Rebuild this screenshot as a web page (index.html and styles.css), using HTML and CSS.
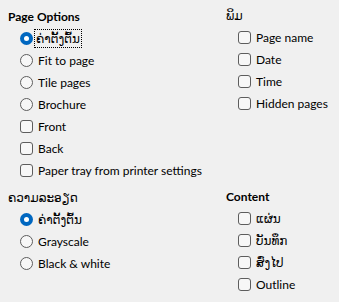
FILE: index.html
```html
<!DOCTYPE html>
<html lang="lo">
<head>
  <meta charset="UTF-8">
  <title>Print Options</title>
  <link rel="stylesheet" href="styles.css">
</head>
<body>
  <div class="panel">
    <div class="group">
      <h3>Page Options</h3>
      <label class="item"><span class="radio checked"></span><span class="text focus">ຄ່າຕັ້ງຕົ້ນ</span></label>
      <label class="item"><span class="radio"></span><span class="text">Fit to page</span></label>
      <label class="item"><span class="radio"></span><span class="text">Tile pages</span></label>
      <label class="item"><span class="radio"></span><span class="text">Brochure</span></label>
      <label class="item"><span class="check"></span><span class="text">Front</span></label>
      <label class="item"><span class="check"></span><span class="text">Back</span></label>
      <label class="item"><span class="check"></span><span class="text">Paper tray from printer settings</span></label>
    </div>
    <div class="group right">
      <h3 class="lao">ພິມ</h3>
      <label class="item"><span class="check"></span><span class="text">Page name</span></label>
      <label class="item"><span class="check"></span><span class="text">Date</span></label>
      <label class="item"><span class="check"></span><span class="text">Time</span></label>
      <label class="item"><span class="check"></span><span class="text">Hidden pages</span></label>
    </div>
    <div class="group">
      <h3 class="lao">ຄວາມລະອຽດ</h3>
      <label class="item"><span class="radio checked"></span><span class="text">ຄ່າຕັ້ງຕົ້ນ</span></label>
      <label class="item"><span class="radio"></span><span class="text">Grayscale</span></label>
      <label class="item"><span class="radio"></span><span class="text">Black &amp; white</span></label>
    </div>
    <div class="group right">
      <h3>Content</h3>
      <label class="item"><span class="check"></span><span class="text">ແຜ່ນ</span></label>
      <label class="item"><span class="check"></span><span class="text">ບັນທຶກ</span></label>
      <label class="item"><span class="check"></span><span class="text">ສົ່ງໄປ</span></label>
      <label class="item"><span class="check"></span><span class="text">Outline</span></label>
    </div>
  </div>
</body>
</html>
```

FILE: styles.css
```css
body {
  margin: 0;
  background-color: #f0f0f0;
  font-family: Lato, "Open Sans", "DejaVu Sans", sans-serif;
  font-size: 12.3px;
  color: #000;
}
.panel {
  display: grid;
  grid-template-columns: 218px 1fr;
  padding: 0 0 0 8px;
}
.group {
  padding-top: 7px;
}
.group.right {
  padding-top: 6px;
}
h3 {
  margin: 0;
  font-size: 12px;
  font-weight: bold;
  line-height: 20px;
  height: 20px;
}
h3.lao {
  font-weight: normal;
}
.item {
  display: flex;
  align-items: center;
  height: 22px;
  padding-left: 12px;
}
.radio,
.check {
  flex: none;
  width: 13px;
  height: 13px;
  box-sizing: border-box;
  border: 1px solid #5d5d5d;
  background-color: #f7f7f7;
  margin-right: 4px;
}
.radio {
  border-radius: 50%;
}
.radio.checked {
  border: none;
  background-color: #0067c0;
  position: relative;
}
.radio.checked::after {
  content: "";
  position: absolute;
  left: 4px;
  top: 4px;
  width: 5px;
  height: 5px;
  border-radius: 50%;
  background-color: #fff;
}
.check {
  border-radius: 3px;
}
.text {
  line-height: 15px;
  padding: 0 1px;
  white-space: nowrap;
}
.text:lang(lo),
.text.focus {
  font-size: 12px;
}
.text.focus {
  outline: 1px dotted #000;
  margin-left: -2px;
  padding: 1px;
}
```
